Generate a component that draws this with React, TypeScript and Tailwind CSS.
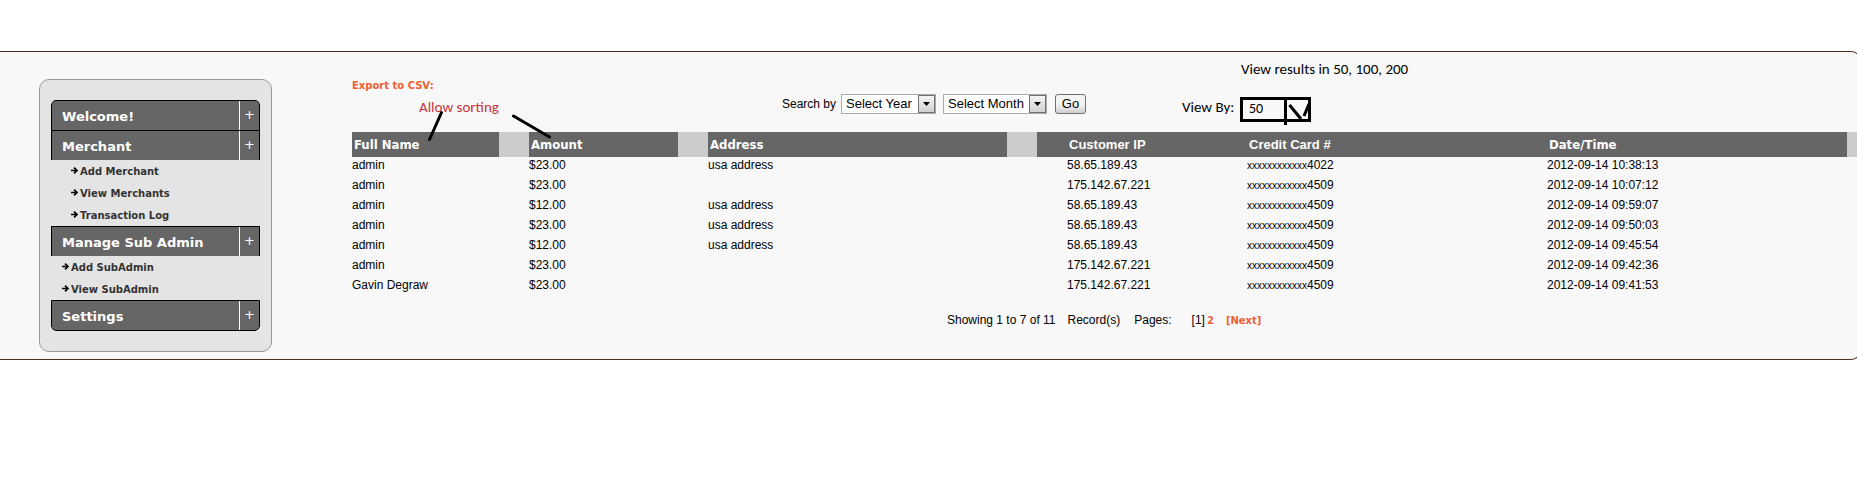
import React from 'react';

const verdana = "font-['Verdana','DejaVu_Sans',sans-serif]";
const tahoma = "font-['Tahoma','DejaVu_Sans_Condensed','DejaVu_Sans',sans-serif]";
const calibri = "font-['Calibri','Carlito','Lato',sans-serif]";

type Item = { label: string };
type Section = { title: string; indent?: string; items: Item[] };

const sections: Section[] = [
  { title: 'Welcome!', items: [] },
  {
    title: 'Merchant',
    indent: 'pl-5',
    items: [{ label: 'Add Merchant' }, { label: 'View Merchants' }, { label: 'Transaction Log' }],
  },
  {
    title: 'Manage Sub Admin',
    indent: 'pl-[11px]',
    items: [{ label: 'Add SubAdmin' }, { label: 'View SubAdmin' }],
  },
  { title: 'Settings', items: [] },
];

const rows = [
  ['admin', '$23.00', 'usa address', '58.65.189.43', '4022', '2012-09-14 10:38:13'],
  ['admin', '$23.00', '', '175.142.67.221', '4509', '2012-09-14 10:07:12'],
  ['admin', '$12.00', 'usa address', '58.65.189.43', '4509', '2012-09-14 09:59:07'],
  ['admin', '$23.00', 'usa address', '58.65.189.43', '4509', '2012-09-14 09:50:03'],
  ['admin', '$12.00', 'usa address', '58.65.189.43', '4509', '2012-09-14 09:45:54'],
  ['admin', '$23.00', '', '175.142.67.221', '4509', '2012-09-14 09:42:36'],
  ['Gavin Degraw', '$23.00', '', '175.142.67.221', '4509', '2012-09-14 09:41:53'],
];

function ArrowIcon() {
  return (
    <svg className="mb-[3px] h-[7px] w-[7px] shrink-0" viewBox="0 0 7 7" fill="none" stroke="#000" aria-hidden="true">
      <path d="M0 3.5H6M3 0.6L6 3.5L3 6.4" strokeWidth="1.6" />
    </svg>
  );
}

function Sidebar() {
  return (
    <nav className={`mt-[27px] ml-[39px] w-[233px] shrink-0 rounded-[10px] border border-[#999] bg-[#e4e4e4] px-[11px] py-5 ${verdana}`}>
      <div className="overflow-hidden rounded-[5px]">
        {sections.map((section, i) => (
          <div key={section.title}>
            <button
              type="button"
              className={`flex w-full items-stretch border-x border-t border-black bg-[#666] text-left text-white ${
                i === 0 ? 'rounded-t-[5px]' : ''
              } ${i === sections.length - 1 ? 'h-[31px] rounded-b-[5px] border-b' : 'h-[30px]'}`}
            >
              <span className="flex-1 pt-[6px] pl-[10px] text-[13px] leading-5 font-bold">{section.title}</span>
              <span className="w-5 border-l border-white pt-1 text-center text-[13px] leading-5">+</span>
            </button>
            {section.items.length > 0 && (
              <ul className={section.indent}>
                {section.items.map((item) => (
                  <li key={item.label}>
                    <a href="#" className="flex h-[22px] items-center gap-[2px] pt-px text-[10px] font-bold text-[#333]">
                      <ArrowIcon />
                      {item.label}
                    </a>
                  </li>
                ))}
              </ul>
            )}
          </div>
        ))}
      </div>
    </nav>
  );
}

function DropDown({ label, className }: { label: string; className: string }) {
  return (
    <span className={`relative flex h-5 ${className}`}>
      <select
        aria-label={label}
        className="h-5 w-full appearance-none border border-[#aaa] bg-white pl-1 text-[13px] leading-[18px] text-black"
      >
        <option>{label}</option>
      </select>
      <span className="pointer-events-none absolute top-px right-px flex h-[18px] w-[17px] items-center justify-center border border-[#707070] bg-linear-to-b from-[#f4f4f4] to-[#d2d2d2]">
        <svg className="h-1 w-[7px]" viewBox="0 0 7 4" aria-hidden="true">
          <path d="M0 0H7L3.5 4Z" fill="#000" />
        </svg>
      </span>
    </span>
  );
}

function Toolbar() {
  return (
    <div className="relative flex h-20 items-start">
      <div className="w-[430px] shrink-0 pt-[26px]">
        <a href="#" className={`block text-[10px] leading-4 font-bold text-[#ee6030] ${verdana}`}>
          Export to CSV:
        </a>
        <p className={`pt-[3px] pl-[67px] text-[15px] leading-5 text-[#c8343c] ${calibri}`}>Allow sorting</p>
      </div>
      <form className="flex shrink-0 items-center pt-[42px]" onSubmit={(e) => e.preventDefault()}>
        <span className="w-[59px] text-[12px] leading-5">Search by</span>
        <DropDown label="Select Year" className="w-[95px]" />
        <DropDown label="Select Month" className="ml-[7px] w-[104px]" />
        <button
          type="submit"
          className="ml-2 h-5 w-[31px] rounded-[3px] border border-[#707070] bg-linear-to-b from-[#f4f4f4] from-50% to-[#d0d0d0] text-[13px] leading-[18px]"
        >
          Go
        </button>
      </form>
      <div className={`ml-24 shrink-0 pt-[7px] text-[15px] leading-5 ${calibri}`}>
        <p className="pl-[59px]">View results in 50, 100, 200</p>
        <div className="flex pt-[18px]">
          <label htmlFor="view-by" className="w-[58px]">
            View By:
          </label>
          <span className="relative h-[25px] w-[71px]">
            <select
              id="view-by"
              className="h-full w-full appearance-none border-[3px] border-black bg-transparent pb-[2px] pl-[6px] text-[14px] leading-4 text-black"
            >
              <option>50</option>
              <option>100</option>
              <option>200</option>
            </select>
            <svg
              className="pointer-events-none absolute top-0 right-0 h-7 w-[27px]"
              viewBox="0 0 27 28"
              fill="none"
              stroke="#000"
              aria-hidden="true"
            >
              <path d="M1.500 1V28" strokeWidth="3" />
              <path d="M5.500 8L17 22M20 19L25 7" strokeWidth="3" />
            </svg>
          </span>
        </div>
      </div>
      <svg
        className="pointer-events-none absolute top-[58px] left-[74px] h-8 w-32"
        viewBox="0 0 128 32"
        fill="none"
        stroke="#000"
        strokeWidth="3"
        strokeLinecap="round"
        aria-hidden="true"
      >
        <path d="M15.500 2.500L3.500 29.500M87.500 6L123.500 27" />
      </svg>
    </div>
  );
}

function Records() {
  const dark = 'bg-[#666] p-0 text-left font-bold text-white';
  const gap = 'bg-[#ccc] p-0';
  return (
    <table className="w-full table-fixed border-collapse text-[12px] leading-4">
      <colgroup>
        <col className="w-[147px]" />
        <col className="w-[30px]" />
        <col className="w-[149px]" />
        <col className="w-[30px]" />
        <col className="w-[299px]" />
        <col className="w-[30px]" />
        <col className="w-[210px]" />
        <col className="w-[300px]" />
        <col />
        <col className="w-[13px]" />
      </colgroup>
      <thead>
        <tr className="h-[25px] text-[13px]">
          <th scope="col" className={`${dark} pl-[2px] ${tahoma}`}>Full Name</th>
          <td className={gap} />
          <th scope="col" className={`${dark} pl-[2px] ${tahoma}`}>Amount</th>
          <td className={gap} />
          <th scope="col" className={`${dark} pl-[2px] ${tahoma}`}>Address</th>
          <td className={gap} />
          <th scope="col" className={`${dark} pl-8`}>Customer IP</th>
          <th scope="col" className={`${dark} pl-[2px]`}>Credit Card #</th>
          <th scope="col" className={`${dark} pl-[2px] ${tahoma}`}>Date/Time</th>
          <td className={gap} />
        </tr>
      </thead>
      <tbody>
        {rows.map(([name, amount, address, ip, card, date]) => (
          <tr key={date} className="h-5 align-top">
            <td>{name}</td>
            <td />
            <td>{amount}</td>
            <td />
            <td>{address}</td>
            <td />
            <td className="pl-[30px]">{ip}</td>
            <td>
              <span className="text-[10px]">xxxxxxxxxxxx</span>
              {card}
            </td>
            <td>{date}</td>
            <td />
          </tr>
        ))}
      </tbody>
    </table>
  );
}

function Pager() {
  const link = `text-[10px] font-bold text-[#ee6030] ${verdana}`;
  return (
    <div className="flex items-baseline pt-[15px] pl-[595px] text-[12px] leading-4">
      <span>Showing 1 to 7 of 11</span>
      <span className="ml-3">Record(s)</span>
      <span className="ml-[14px]">Pages:</span>
      <span className="ml-5">[1]</span>
      <a href="#" className={`ml-[2px] ${link}`}>2</a>
      <a href="#" className={`ml-3 ${link}`}>[Next]</a>
    </div>
  );
}

export default function App() {
  return (
    <div className="min-h-screen overflow-hidden bg-white pt-[51px] font-['Arial','Liberation_Sans',sans-serif] text-black">
      <div className="-mr-1 flex items-start rounded-r-[10px] border-y border-r border-[#4a2f22] bg-[#f8f8f8] pb-[7px]">
        <Sidebar />
        <main className="ml-20 min-w-0 flex-1">
          <Toolbar />
          <Records />
          <Pager />
        </main>
      </div>
    </div>
  );
}
